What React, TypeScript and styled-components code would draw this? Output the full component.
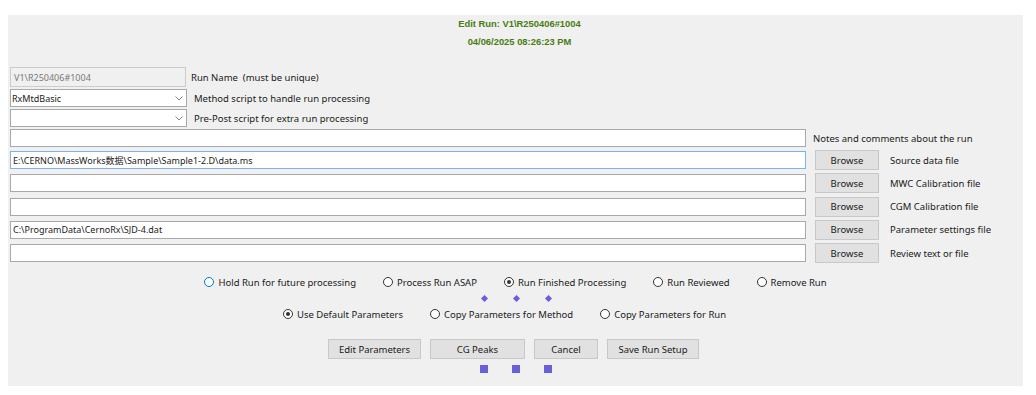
import React from "react";
import styled, { createGlobalStyle } from "styled-components";

const GlobalStyle = createGlobalStyle`
  body {
    margin: 0;
    background: #ffffff;
    font-family: "Noto Sans", "Open Sans", "Noto Sans CJK SC", sans-serif;
  }
`;

const Panel = styled.div`
  margin: 15px 0 0 8px;
  width: 1015px;
  height: 371px;
  background-color: #f0f0f0;
  display: flex;
  flex-direction: column;
`;

const Header = styled.div`
  display: flex;
  flex-direction: column;
  align-items: center;
  font-family: "Liberation Sans", Arial, sans-serif;
  font-weight: bold;
  font-size: 9.4px;
  line-height: 18px;
  color: #4a7c12;
  padding-left: 8px;
`;

const Form = styled.div`
  display: flex;
  flex-direction: column;
  gap: 2px;
  margin-top: 16px;
  padding-left: 2px;
`;

const Row = styled.div<{ $h: number }>`
  display: flex;
  align-items: center;
  height: ${(p) => p.$h}px;
`;

const BrowseRows = styled.div`
  display: flex;
  flex-direction: column;
  gap: 3.3px;
  margin-top: 1px;
`;

const Label = styled.span<{ $ml: number }>`
  margin-left: ${(p) => p.$ml}px;
  font-size: 9.5px;
  color: #1a1a1a;
  white-space: nowrap;
`;

const TextBox = styled.div<{ $w: number; $h?: number; $disabled?: boolean; $focus?: boolean }>`
  box-sizing: border-box;
  width: ${(p) => p.$w}px;
  height: ${(p) => p.$h ?? 18}px;
  border: 1px solid ${(p) => (p.$focus ? "#7fb2e5" : p.$disabled ? "#cccccc" : "#a9a9a9")};
  background: ${(p) => (p.$disabled ? "#f0f0f0" : "#ffffff")};
  color: ${(p) => (p.$disabled ? "#7a7a7a" : "#1a1a1a")};
  font-size: 9px;
  display: flex;
  align-items: center;
  padding-left: ${(p) => (p.$disabled ? 3 : 2)}px;
  white-space: nowrap;
  overflow: hidden;
`;

const SelectBox = styled(TextBox)`
  justify-content: space-between;
  padding-right: 3px;
  padding-left: 1px;
`;

const Chevron = () => (
  <svg width="8" height="5" viewBox="0 0 8 5">
    <path d="M0.5 0.5 L4 4 L7.5 0.5" fill="none" stroke="#7a7a7a" strokeWidth="0.9" />
  </svg>
);

const BrowseButton = styled.div`
  box-sizing: border-box;
  width: 64px;
  height: 20px;
  margin-left: 9px;
  background: #e1e1e1;
  border: 1px solid #c8c8c8;
  font-size: 9.5px;
  color: #1a1a1a;
  display: flex;
  align-items: center;
  justify-content: center;
`;

const RadioRow = styled.div<{ $mt: number; $shift?: number }>`
  display: flex;
  justify-content: center;
  align-items: center;
  gap: 27px;
  height: 14px;
  margin-top: ${(p) => p.$mt}px;
  margin-right: ${(p) => p.$shift ?? 0}px;
`;

const RadioItem = styled.div`
  display: flex;
  align-items: center;
  gap: 4px;
  font-size: 9.5px;
  color: #1a1a1a;
  white-space: nowrap;
`;

const Circle = styled.span<{ $checked?: boolean; $focus?: boolean }>`
  box-sizing: border-box;
  width: 10px;
  height: 10px;
  border-radius: 50%;
  border: 1px solid ${(p) => (p.$focus ? "#0078d7" : "#333333")};
  background: #ffffff;
  display: flex;
  align-items: center;
  justify-content: center;
  &::after {
    content: "";
    display: ${(p) => (p.$checked ? "block" : "none")};
    width: 4px;
    height: 4px;
    border-radius: 50%;
    background: #333333;
  }
`;

const MarkerRow = styled.div<{ $mt: number }>`
  display: flex;
  justify-content: center;
  gap: 24px;
  margin-top: ${(p) => p.$mt}px;
  padding-left: 1px;
`;

const Diamond = styled.span`
  width: 5px;
  height: 5px;
  background: #6a5fd8;
  transform: rotate(45deg);
  margin: 0 1.5px;
`;

const Square = styled.span`
  width: 8px;
  height: 8px;
  background: #6a5fd8;
`;

const ButtonRow = styled.div`
  display: flex;
  justify-content: center;
  gap: 9px;
  margin-top: 18px;
  padding-right: 4px;
`;

const ActionButton = styled.div<{ $w: number }>`
  box-sizing: border-box;
  width: ${(p) => p.$w}px;
  height: 20px;
  background: #e1e1e1;
  border: 1px solid #c8c8c8;
  font-size: 9.5px;
  color: #1a1a1a;
  display: flex;
  align-items: center;
  justify-content: center;
`;

const browseRows = [
  { value: "E:\\CERNO\\MassWorks数据\\Sample\\Sample1-2.D\\data.ms", label: "Source data file", focus: true },
  { value: "", label: "MWC Calibration file" },
  { value: "", label: "CGM Calibration file" },
  { value: "C:\\ProgramData\\CernoRx\\SJD-4.dat", label: "Parameter settings file" },
  { value: "", label: "Review text or file" },
];

const statusOptions = [
  { label: "Hold Run for future processing", focus: true },
  { label: "Process Run ASAP" },
  { label: "Run Finished Processing", checked: true },
  { label: "Run Reviewed" },
  { label: "Remove Run" },
];

const paramOptions = [
  { label: "Use Default Parameters", checked: true },
  { label: "Copy Parameters for Method" },
  { label: "Copy Parameters for Run" },
];

const buttons = [
  { label: "Edit Parameters", w: 93 },
  { label: "CG Peaks", w: 95 },
  { label: "Cancel", w: 64 },
  { label: "Save Run Setup", w: 92 },
];

export default function App() {
  return (
    <>
      <GlobalStyle />
      <Panel>
        <Header>
          <div>Edit Run: V1\R250406#1004</div>
          <div>04/06/2025 08:26:23 PM</div>
        </Header>

        <Form>
          <Row $h={20}>
            <TextBox $w={176} $h={20} $disabled>V1\R250406#1004</TextBox>
            <Label $ml={5}>Run Name&nbsp; (must be unique)</Label>
          </Row>
          <Row $h={18}>
            <SelectBox $w={177}>
              <span>RxMtdBasic</span>
              <Chevron />
            </SelectBox>
            <Label $ml={7}>Method script to handle run processing</Label>
          </Row>
          <Row $h={18}>
            <SelectBox $w={177}>
              <span />
              <Chevron />
            </SelectBox>
            <Label $ml={7}>Pre-Post script for extra run processing</Label>
          </Row>
          <Row $h={18}>
            <TextBox $w={796} />
            <Label $ml={7}>Notes and comments about the run</Label>
          </Row>

          <BrowseRows>
            {browseRows.map((r) => (
              <Row $h={20} key={r.label}>
                <TextBox $w={796} $focus={r.focus}>{r.value}</TextBox>
                <BrowseButton>Browse</BrowseButton>
                <Label $ml={11}>{r.label}</Label>
              </Row>
            ))}
          </BrowseRows>
        </Form>

        <RadioRow $mt={12}>
          {statusOptions.map((o) => (
            <RadioItem key={o.label}>
              <Circle $checked={o.checked} $focus={o.focus} />
              {o.label}
            </RadioItem>
          ))}
        </RadioRow>

        <MarkerRow $mt={7}>
          <Diamond />
          <Diamond />
          <Diamond />
        </MarkerRow>

        <RadioRow $mt={6} $shift={22}>
          {paramOptions.map((o) => (
            <RadioItem key={o.label}>
              <Circle $checked={o.checked} />
              {o.label}
            </RadioItem>
          ))}
        </RadioRow>

        <ButtonRow>
          {buttons.map((b) => (
            <ActionButton $w={b.w} key={b.label}>{b.label}</ActionButton>
          ))}
        </ButtonRow>

        <MarkerRow $mt={6}>
          <Square />
          <Square />
          <Square />
        </MarkerRow>
      </Panel>
    </>
  );
}
